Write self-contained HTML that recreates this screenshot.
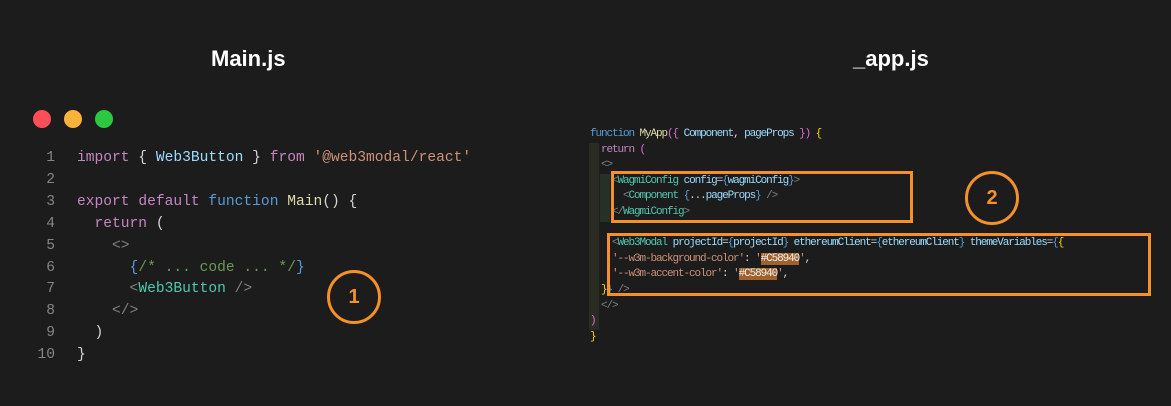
<!DOCTYPE html>
<html><head><style>
body{margin:0;width:1171px;height:406px;background:#1c1c1c;position:relative;overflow:hidden;font-family:"Liberation Sans",sans-serif}
.t{position:absolute;color:#fff;font-weight:bold;font-size:22px;top:46px}
.dot{position:absolute;width:18px;height:18px;border-radius:50%;top:110px}
.code{position:absolute;font-family:"Liberation Mono",monospace;white-space:pre;color:#d4d4d4}
.l{position:absolute;left:33px;width:22px;text-align:right;color:#858585;font-family:"Liberation Mono",monospace;font-size:14.6px}
.k{color:#c586c0}.b{color:#569cd6}.v{color:#9cdcfe}.s{color:#ce9178}.f{color:#dcdcaa}.g{color:#4ec9b0}.c{color:#6a9955}.p{color:#808080}.y{color:#ffd700}.m{color:#da70d6}
.circ{position:absolute;border:3px solid #f5902a;border-radius:50%;color:#f5902a;font-weight:bold;font-size:20px;text-align:center;box-sizing:border-box}
.box{position:absolute;border:3px solid #f5902a;box-sizing:border-box}
.hl{background:#a0622c;color:#eee}
.guide{position:absolute;background:#2a2c24}
</style></head><body>
<div class="t" style="left:211px">Main.js</div>
<div class="t" style="left:853px">_app.js</div>
<div class="dot" style="left:33px;background:#fe4f58"></div>
<div class="dot" style="left:64px;background:#fdb23a"></div>
<div class="dot" style="left:95px;background:#2ec840"></div>
<div class="l" style="top:148px;line-height:21.9px">1<br>2<br>3<br>4<br>5<br>6<br>7<br>8<br>9<br>10</div>
<div class="code" style="left:77px;top:148px;font-size:14.6px;line-height:21.9px"><span class="k">import</span> { <span class="v">Web3Button</span> } <span class="k">from</span> <span class="s">'@web3modal/react'</span>

<span class="k">export</span> <span class="k">default</span> <span class="b">function</span> <span class="f">Main</span>() {
  <span class="k">return</span> (
    <span class="p">&lt;&gt;</span>
      <span class="b">{</span><span class="c">/* ... code ... */</span><span class="b">}</span>
      <span class="p">&lt;</span><span class="g">Web3Button</span> <span class="p">/&gt;</span>
    <span class="p">&lt;/&gt;</span>
  )
}</div>
<div class="circ" style="left:327px;top:270px;width:54px;height:54px;line-height:48px">1</div>
<div class="guide" style="left:589px;top:143px;width:10px;height:187px"></div>
<div class="guide" style="left:600px;top:174px;width:10px;height:48px;background:#263026"></div>
<div class="code" style="left:590px;top:127px;font-size:11px;letter-spacing:-1.1px;line-height:15.6px"><span class="b">function</span> <span class="f">MyApp</span><span class="m">({</span> <span class="v">Component</span>, <span class="v">pageProps</span> <span class="m">})</span> <span class="y">{</span>
  <span class="k">return</span> <span class="m">(</span>
  <span class="p">&lt;&gt;</span>
    <span class="p">&lt;</span><span class="g">WagmiConfig</span> <span class="v">config</span>=<span class="b">{</span><span class="v">wagmiConfig</span><span class="b">}</span><span class="p">&gt;</span>
      <span class="p">&lt;</span><span class="g">Component</span> <span class="b">{</span>...<span class="v">pageProps</span><span class="b">}</span> <span class="p">/&gt;</span>
    <span class="p">&lt;/</span><span class="g">WagmiConfig</span><span class="p">&gt;</span>

    <span class="p">&lt;</span><span class="g">Web3Modal</span> <span class="v">projectId</span>=<span class="b">{</span><span class="v">projectId</span><span class="b">}</span> <span class="v">ethereumClient</span>=<span class="b">{</span><span class="v">ethereumClient</span><span class="b">}</span> <span class="v">themeVariables</span>=<span class="b">{</span><span class="y">{</span>
    <span class="s">'--w3m-background-color'</span>: <span class="s">'<span class="hl">#C58940</span>'</span>,
    <span class="s">'--w3m-accent-color'</span>: <span class="s">'<span class="hl">#C58940</span>'</span>,
  <span class="y">}</span><span class="b">}</span> <span class="p">/&gt;</span>
  <span class="p">&lt;/&gt;</span>
<span class="m">)</span>
<span class="y">}</span></div>
<div class="box" style="left:611px;top:171px;width:302px;height:52px"></div>
<div class="box" style="left:607px;top:233px;width:544px;height:63px"></div>
<div class="circ" style="left:965px;top:171px;width:54px;height:54px;line-height:48px">2</div>
</body></html>
